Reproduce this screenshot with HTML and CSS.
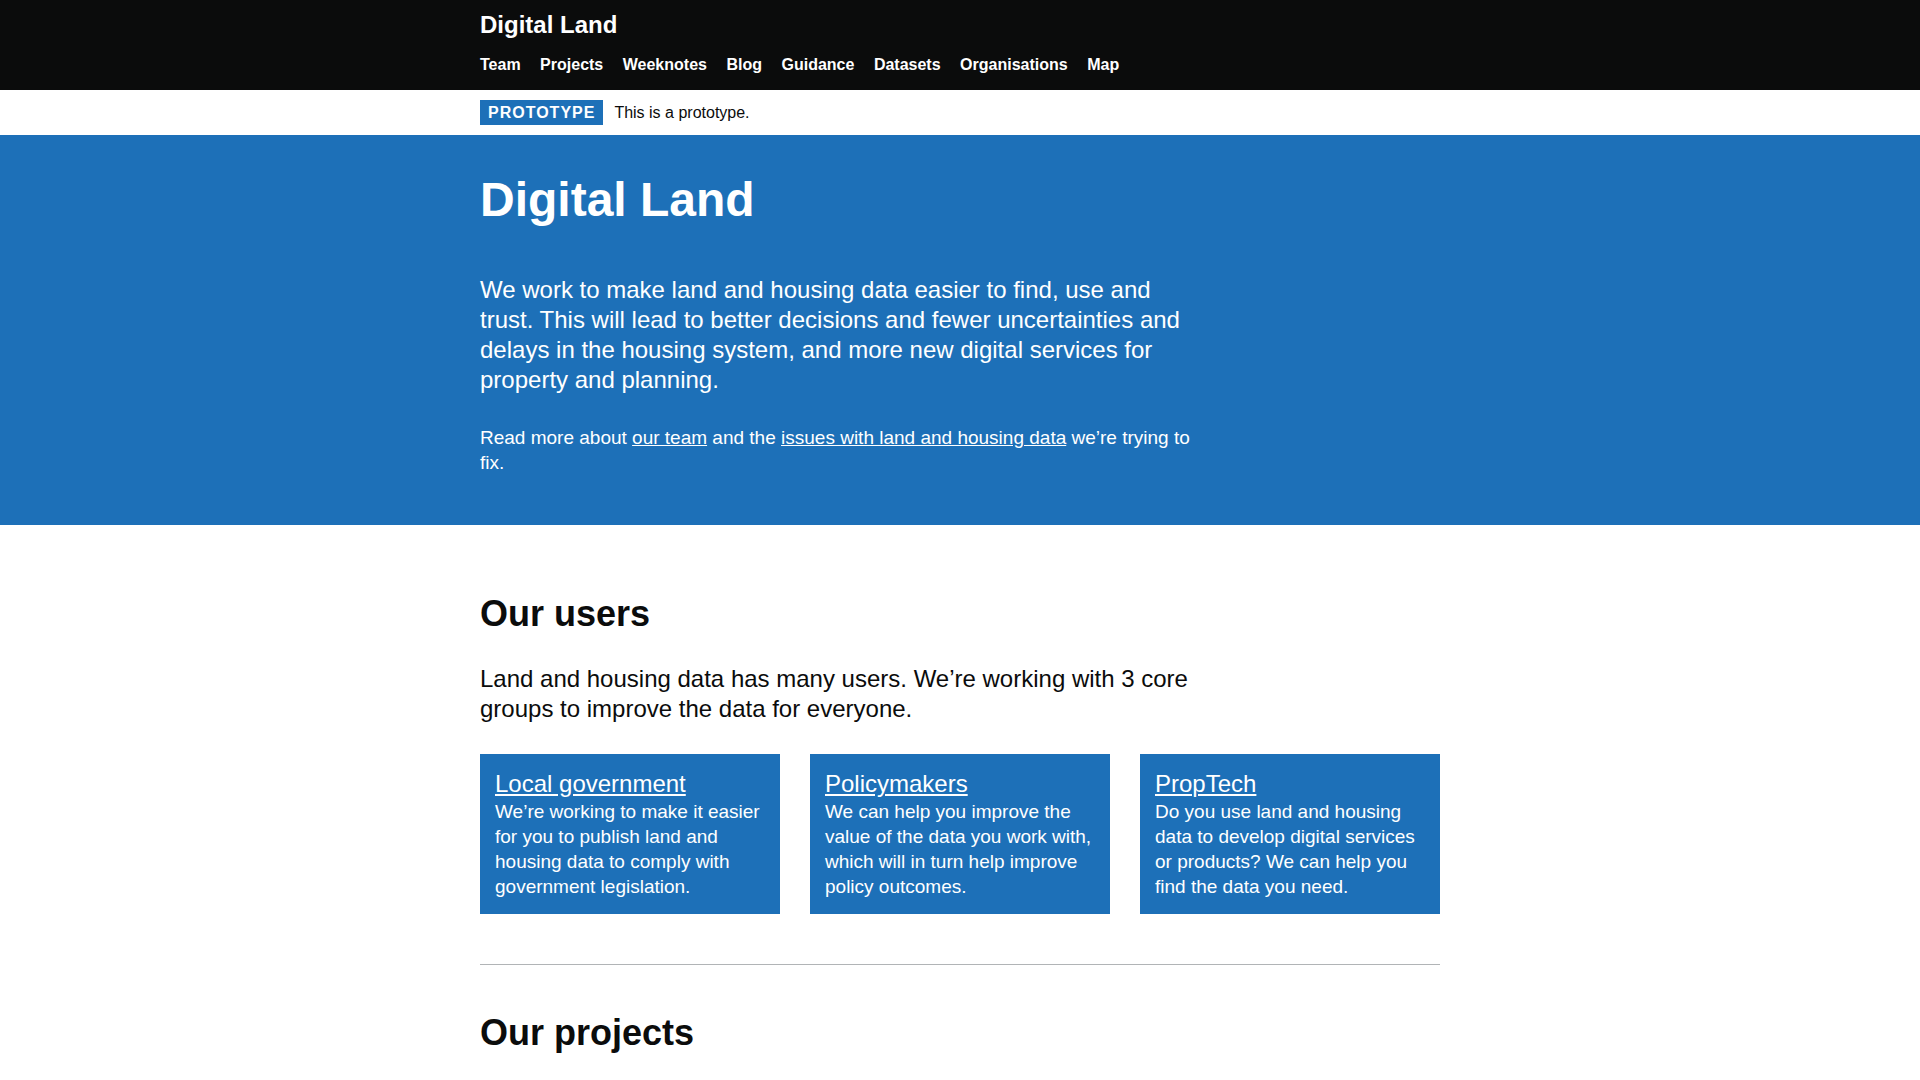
FILE: index.html
```html
<!DOCTYPE html>
<html lang="en">
<head>
<meta charset="utf-8">
<title>Digital Land</title>
<link rel="stylesheet" href="styles.css">
</head>
<body>
<header class="header">
  <div class="container">
    <a class="logo" href="#">Digital Land</a>
    <nav class="nav">
      <a href="#">Team</a>
      <a href="#">Projects</a>
      <a href="#">Weeknotes</a>
      <a href="#">Blog</a>
      <a href="#">Guidance</a>
      <a href="#">Datasets</a>
      <a href="#">Organisations</a>
      <a href="#">Map</a>
    </nav>
  </div>
</header>
<div class="phase">
  <div class="container phase-inner">
    <strong class="tag">Prototype</strong>
    <span class="phase-text">This is a prototype.</span>
  </div>
</div>
<section class="hero">
  <div class="container">
    <h1 class="hero-title">Digital Land</h1>
    <div class="measure">
      <p class="lead">We work to make land and housing data easier to find, use and trust. This will lead to better decisions and fewer uncertainties and delays in the housing system, and more new digital services for property and planning.</p>
      <p class="body last">Read more about <a href="#">our team</a> and the <a href="#">issues with land and housing data</a> we’re trying to fix.</p>
    </div>
  </div>
</section>
<main class="container main">
  <h2 class="heading-l">Our users</h2>
  <p class="lead measure">Land and housing data has many users. We’re working with 3 core groups to improve the data for everyone.</p>
  <div class="cards">
    <div class="card">
      <a class="card-title" href="#">Local government</a>
      <p class="card-text">We’re working to make it easier for you to publish land and housing data to comply with government legislation.</p>
    </div>
    <div class="card">
      <a class="card-title" href="#">Policymakers</a>
      <p class="card-text">We can help you improve the value of the data you work with, which will in turn help improve policy outcomes.</p>
    </div>
    <div class="card">
      <a class="card-title" href="#">PropTech</a>
      <p class="card-text">Do you use land and housing data to develop digital services or products? We can help you find the data you need.</p>
    </div>
  </div>
  <hr class="break">
  <h2 class="heading-l">Our projects</h2>
</main>
</body>
</html>
```

FILE: styles.css
```css
* { box-sizing: border-box; }
html, body { margin: 0; padding: 0; }
body {
  font-family: "Liberation Sans", Arial, sans-serif;
  color: #0b0c0c;
  background: #ffffff;
  -webkit-font-smoothing: antialiased;
}
.container {
  width: 960px;
  margin: 0 auto;
}
.header {
  background: #0b0c0c;
  padding: 10px 0 15px;
}
.logo {
  display: block;
  color: #ffffff;
  font-weight: 700;
  font-size: 24px;
  line-height: 30px;
  text-decoration: none;
}
.nav {
  display: flex;
  gap: 19.5px;
  margin-top: 15px;
}
.nav a {
  color: #ffffff;
  font-weight: 700;
  font-size: 16px;
  line-height: 20px;
  text-decoration: none;
}
.phase {
  padding: 10px 0;
  background: #ffffff;
}
.phase-inner {
  display: flex;
  align-items: center;
  gap: 11px;
}
.tag {
  display: inline-block;
  background: #1d70b8;
  color: #ffffff;
  font-weight: 700;
  font-size: 16px;
  line-height: 16px;
  letter-spacing: 1px;
  text-transform: uppercase;
  padding: 5px 8px 4px;
}
.phase-text {
  font-size: 16px;
  line-height: 20px;
}
.hero {
  background: #1d70b8;
  color: #ffffff;
  padding: 40px 0 50px;
}
.hero-title {
  margin: 0 0 50px;
  font-size: 48px;
  line-height: 50px;
  font-weight: 700;
}
.measure { max-width: 725px; }
.lead {
  margin: 0 0 30px;
  font-size: 24px;
  line-height: 30px;
}
.body {
  margin: 0 0 20px;
  font-size: 19px;
  line-height: 25px;
}
.body.last { margin-bottom: 0; }
.hero a { color: #ffffff; }
.main { padding-top: 69px; }
.heading-l {
  margin: 0 0 30px;
  font-size: 36px;
  line-height: 40px;
  font-weight: 700;
}
.cards {
  display: grid;
  grid-template-columns: repeat(3, 300px);
  gap: 30px;
}
.card {
  background: #1d70b8;
  color: #ffffff;
  padding: 15px;
}
.card-title {
  display: block;
  color: #ffffff;
  font-size: 24px;
  line-height: 30px;
}
.card-text {
  margin: 0;
  font-size: 19px;
  line-height: 25px;
}
.break {
  border: 0;
  border-top: 1px solid #b1b4b6;
  margin: 50px 0 48px;
}
```
